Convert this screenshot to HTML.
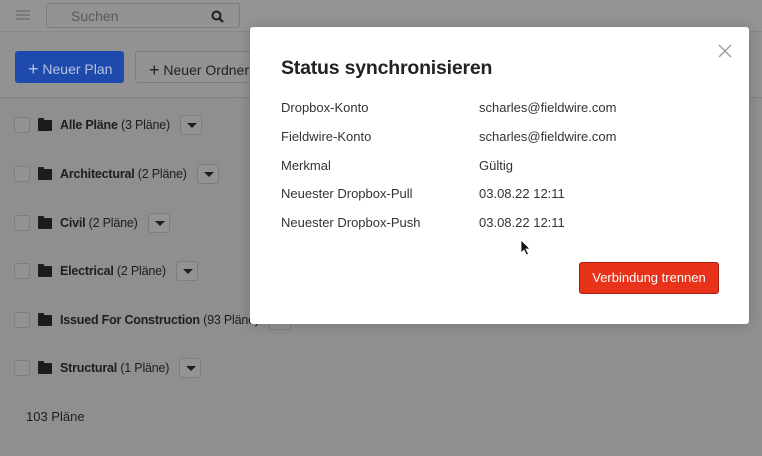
<!DOCTYPE html>
<html><head><meta charset="utf-8"><style>
*{margin:0;padding:0;box-sizing:border-box}
body{width:762px;height:456px;overflow:hidden;background:#8f8f8f;font-family:"Liberation Sans",sans-serif;position:relative;color:#1e1e1e}
.top{position:absolute;left:0;top:0;width:762px;height:32px;background:#949494;border-bottom:1px solid #888}
.tool{position:absolute;left:0;top:32px;width:762px;height:66px;background:#929292;border-bottom:1px solid #7f7f7f}
.abs{position:absolute}
.search{left:46px;top:3px;width:194px;height:25px;border:1px solid #7d7d7d;border-radius:3px;background:#939393;font-size:14px;color:#5a5a5a;padding:4px 0 0 24px}
.btnb{left:15px;top:51px;width:109px;height:32px;background:#1f4aad;border-radius:3px;color:#b8c4dd;font-size:14px;padding:7px 0 0 13px}
.btng{left:135px;top:51px;width:130px;height:32px;background:#939393;border:1px solid #7d7d7d;border-radius:3px;color:#222;font-size:14px;padding:7px 0 0 13px}
.row{position:absolute;left:14px;height:20px;font-size:12.5px;letter-spacing:-0.2px;color:#1e1e1e;display:flex;align-items:center}
.cb{width:16px;height:16px;border:1px solid #7d7d7d;border-radius:3px;background:#939393;margin-right:8px}
.fd{width:14px;height:11px;background:#1c1c1c;border-radius:1px;margin-right:8px;position:relative}
.fd:before{content:"";position:absolute;left:0;top:-2px;width:6px;height:3px;background:#1c1c1c;border-radius:1px 1px 0 0}
.dd{width:22px;height:20px;border:1px solid #7d7d7d;border-radius:3px;background:#939393;margin-left:10px;position:relative}
.dd:after{content:"";position:absolute;left:6px;top:7px;border-left:5px solid transparent;border-right:5px solid transparent;border-top:5px solid #1e1e1e}
.modal{left:250px;top:27px;width:499px;height:297px;background:#fff;border-radius:3px;box-shadow:0 0 12px rgba(0,0,0,.2)}
.m{position:absolute;font-size:13px;color:#333}
</style></head><body>
<div class="top"></div>
<div class="abs" style="left:16px;top:10px;width:14px;height:2px;background:#7a7a7a;box-shadow:0 4px 0 #7a7a7a,0 8px 0 #7a7a7a"></div>
<div class="abs search">Suchen
<svg class="abs" style="left:164px;top:6px" width="13" height="13" viewBox="0 0 13 13"><circle cx="5.5" cy="5.5" r="4" stroke="#1e1e1e" stroke-width="2" fill="none"/><path d="M8.5 8.5L12 12" stroke="#1e1e1e" stroke-width="2.2"/></svg></div>
<div class="tool"></div>
<div class="abs btnb"><span style="font-size:18px;position:relative;top:1px">+</span> Neuer Plan</div>
<div class="abs btng"><span style="font-size:18px;position:relative;top:1px">+</span> Neuer Ordner</div>
<div class="row" style="top:115px"><div class="cb"></div><div class="fd"></div><b>Alle Pläne</b>&nbsp;(3 Pläne)<div class="dd"></div></div>
<div class="row" style="top:164px"><div class="cb"></div><div class="fd"></div><b>Architectural</b>&nbsp;(2 Pläne)<div class="dd"></div></div>
<div class="row" style="top:213px"><div class="cb"></div><div class="fd"></div><b>Civil</b>&nbsp;(2 Pläne)<div class="dd"></div></div>
<div class="row" style="top:261px"><div class="cb"></div><div class="fd"></div><b>Electrical</b>&nbsp;(2 Pläne)<div class="dd"></div></div>
<div class="row" style="top:310px"><div class="cb"></div><div class="fd"></div><b>Issued For Construction</b>&nbsp;(93 Pläne)<div class="dd"></div></div>
<div class="row" style="top:358px"><div class="cb"></div><div class="fd"></div><b>Structural</b>&nbsp;(1 Pläne)<div class="dd"></div></div>
<div class="abs" style="left:26px;top:409px;font-size:13px;color:#1e1e1e">103 Pläne</div>
<div class="abs modal">
<svg class="abs" style="left:468px;top:17px" width="14" height="14"><path d="M1 1L13 13M13 1L1 13" stroke="#999" stroke-width="1.3"/></svg>
<div class="m" style="left:31px;top:30px;font-size:19.5px;font-weight:bold;color:#222;letter-spacing:-0.2px">Status synchronisieren</div>
<div class="m" style="left:31px;top:73px">Dropbox-Konto</div><div class="m" style="left:229px;top:73px">scharles@fieldwire.com</div>
<div class="m" style="left:31px;top:102px">Fieldwire-Konto</div><div class="m" style="left:229px;top:102px">scharles@fieldwire.com</div>
<div class="m" style="left:31px;top:131px">Merkmal</div><div class="m" style="left:229px;top:131px">Gültig</div>
<div class="m" style="left:31px;top:159px">Neuester Dropbox-Pull</div><div class="m" style="left:229px;top:159px">03.08.22 12:11</div>
<div class="m" style="left:31px;top:188px">Neuester Dropbox-Push</div><div class="m" style="left:229px;top:188px">03.08.22 12:11</div>
<svg class="abs" style="left:270px;top:212px" width="12" height="18"><path d="M1 1L1 14L4 11L6.5 16L8.5 15L6 10L10 10Z" fill="#111" stroke="#fff" stroke-width=".8"/></svg>
<div class="abs" style="left:329px;top:235px;width:140px;height:32px;background:#e8321a;border:1px solid #a82010;border-radius:3px;color:#fff;font-size:13px;text-align:center;line-height:30px">Verbindung trennen</div>
</div>
</body></html>
